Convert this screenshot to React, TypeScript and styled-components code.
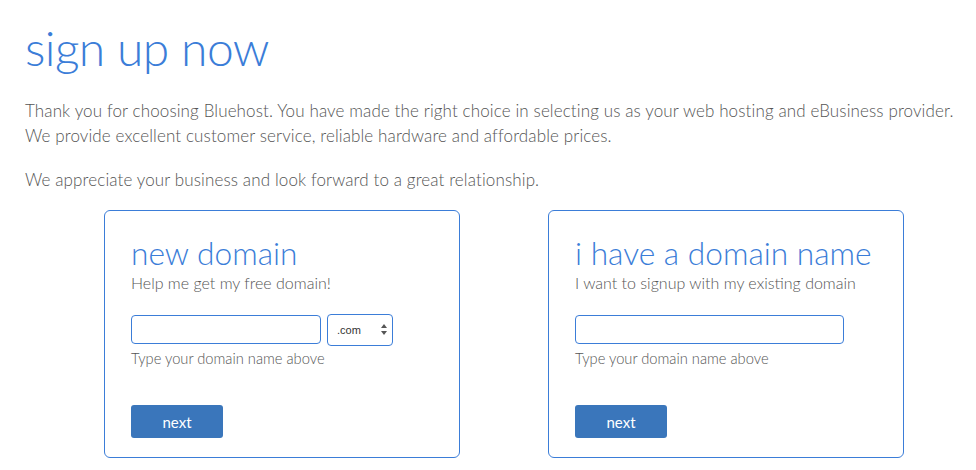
import styled, { createGlobalStyle } from 'styled-components';

const GlobalStyle = createGlobalStyle`
  html, body {
    margin: 0;
    padding: 0;
    background: #fff;
  }
  body {
    font-family: Lato, "Open Sans", sans-serif;
    color: #5a5a5a;
  }
`;

const Page = styled.div`
  width: 976px;
  height: 470px;
  overflow: hidden;
  padding: 20px 0 0 25px;
  box-sizing: border-box;
`;

const Title = styled.h1`
  margin: 0;
  font-weight: 300;
  font-size: 48px;
  line-height: 56px;
  color: #3b7dd8;
  letter-spacing: -0.6px;
`;

const Intro = styled.p`
  margin: 22px 0 0;
  font-size: 17px;
  line-height: 25px;
  font-weight: 300;
  letter-spacing: 0.12px;
  color: #555;
  & + & {
    margin-top: 19px;
  }
`;

const Cards = styled.div`
  display: flex;
  gap: 88px;
  margin: 18px 0 0 79px;
`;

const Card = styled.div`
  width: 356px;
  height: 248px;
  box-sizing: border-box;
  border: 1px solid #3b7dd8;
  border-radius: 6px;
  padding: 24px 26px 0;
  display: flex;
  flex-direction: column;
`;

const CardTitle = styled.h2`
  margin: 0;
  font-weight: 300;
  font-size: 31.7px;
  line-height: 36px;
  color: #3b7dd8;
`;

const CardLead = styled.div`
  margin-top: 1px;
  font-size: 16px;
  line-height: 22px;
  font-weight: 300;
  color: #555;
`;

const FieldRow = styled.div`
  display: flex;
  align-items: center;
  gap: 6px;
  height: 29px;
  margin-top: 21px;
`;

const TextInput = styled.input<{ $wide?: boolean }>`
  width: ${p => (p.$wide ? '269px' : '190px')};
  height: 29px;
  box-sizing: border-box;
  border: 1px solid #3b7dd8;
  border-radius: 4px;
  outline: none;
  padding: 0 8px;
  font-family: inherit;
  font-size: 14px;
`;

const Tld = styled.div`
  width: 66px;
  height: 32px;
  flex-shrink: 0;
  box-sizing: border-box;
  border: 1px solid #3b7dd8;
  border-radius: 4px;
  display: flex;
  align-items: center;
  justify-content: space-between;
  padding: 0 5px 0 9px;
  font-family: "Liberation Sans", Arial, sans-serif;
  font-size: 11px;
  color: #333;
`;

const Hint = styled.div`
  margin-top: 4px;
  font-size: 14.7px;
  line-height: 20px;
  font-weight: 300;
  color: #555;
`;

const NextButton = styled.button`
  margin-top: 37px;
  width: 92px;
  height: 33px;
  border: none;
  border-radius: 3px;
  background: #3a76bb;
  color: #fff;
  font-family: inherit;
  font-size: 15px;
  cursor: pointer;
`;

const Arrows = () => (
  <svg width="6" height="11" viewBox="0 0 6 11">
    <path d="M3 0 L6 4 L0 4 Z" fill="#555" />
    <path d="M3 11 L6 7 L0 7 Z" fill="#555" />
  </svg>
);

const App = () => {
  return (
    <Page>
      <GlobalStyle />
      <Title>sign up now</Title>
      <Intro>
        Thank you for choosing Bluehost. You have made the right choice in selecting us as your web hosting and eBusiness provider.
        <br />
        We provide excellent customer service, reliable hardware and affordable prices.
      </Intro>
      <Intro>We appreciate your business and look forward to a great relationship.</Intro>

      <Cards>
        <Card>
          <CardTitle>new domain</CardTitle>
          <CardLead>Help me get my free domain!</CardLead>
          <FieldRow>
            <TextInput type="text" />
            <Tld>
              .com
              <Arrows />
            </Tld>
          </FieldRow>
          <Hint>Type your domain name above</Hint>
          <NextButton>next</NextButton>
        </Card>

        <Card>
          <CardTitle>i have a domain name</CardTitle>
          <CardLead>I want to signup with my existing domain</CardLead>
          <FieldRow>
            <TextInput type="text" $wide />
          </FieldRow>
          <Hint>Type your domain name above</Hint>
          <NextButton>next</NextButton>
        </Card>
      </Cards>
    </Page>
  );
};

export default App;
